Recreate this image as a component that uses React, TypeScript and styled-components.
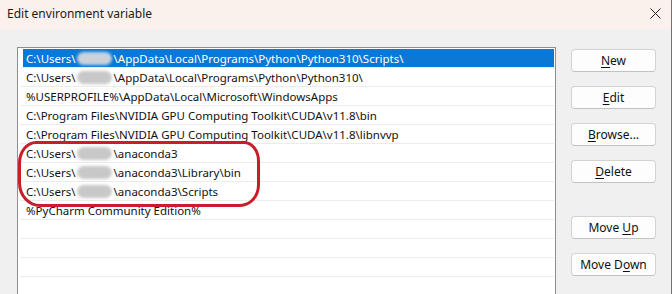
import React from "react";
import styled, { createGlobalStyle } from "styled-components";

const Global = createGlobalStyle`
  html, body { margin: 0; padding: 0; background: #f0f0f0; }
  body { font-family: "Noto Sans", "Open Sans", sans-serif; }
  #root { width: 672px; height: 294px; overflow: hidden; }
`;

const Window = styled.div`
  width: 672px;
  height: 294px;
  box-sizing: border-box;
  border-right: 1px solid #75706d;
  background: #f0f0f0;
  display: flex;
  flex-direction: column;
  overflow: hidden;
  font-size: 12px;
  color: #000;
`;

const TitleBar = styled.div`
  height: 29px;
  flex: none;
  background: #fbf1ec;
  display: flex;
  align-items: center;
  justify-content: space-between;
  padding: 0 10px 3px 7px;
  box-sizing: border-box;
`;

const Title = styled.span`
  font-size: 12px;
  color: #1a1a1a;
`;

const CloseIcon = styled.svg`
  width: 11px;
  height: 11px;
  display: block;
`;

const Body = styled.div`
  flex: 1;
  display: flex;
  align-items: flex-start;
  padding: 18px 15px 0 17px;
  gap: 15px;
  min-height: 0;
`;

const ListBox = styled.div`
  position: relative;
  width: 539px;
  height: 260px;
  box-sizing: border-box;
  background: #fff;
  border: 1px solid #8e8e8e;
  border-bottom: none;
  padding: 1px 1px 0 2px;
  flex: none;
`;

const Row = styled.div`
  height: 18px;
  border-bottom: 1px solid #ececec;
  display: flex;
  align-items: center;
`;

const RowInner = styled.div<{ $selected?: boolean }>`
  flex: 1;
  height: 18px;
  margin-left: 3px;
  padding-left: 3px;
  display: flex;
  align-items: center;
  white-space: pre;
  font-size: 11.5px;
  background: ${(p) => (p.$selected ? "#0a78d4" : "transparent")};
  color: ${(p) => (p.$selected ? "#fff" : "#111")};
`;

const Blur = styled.span<{ $selected?: boolean }>`
  display: inline-block;
  width: 38px;
  height: 14px;
  position: relative;
  vertical-align: middle;
  &::after {
    content: "";
    position: absolute;
    left: 1px;
    right: 2px;
    top: 1px;
    bottom: 0px;
    border-radius: 7px;
    background: ${(p) => (p.$selected ? "#ccd2da" : "#c8c8c8")};
    filter: blur(1.4px);
  }
`;

const Highlight = styled.div`
  position: absolute;
  left: 0px;
  top: 93px;
  width: 236px;
  height: 60px;
  border: 3px solid #c81e2b;
  border-radius: 18px 16px 20px 22px / 22px 20px 22px 24px;
  pointer-events: none;
`;

const Buttons = styled.div`
  width: 85px;
  flex: none;
  display: flex;
  flex-direction: column;
  gap: 14px;
  padding-top: 2px;
`;

const Button = styled.button<{ $spaced?: boolean }>`
  height: 23px;
  box-sizing: border-box;
  width: 85px;
  border: 1px solid #d3d3d3;
  border-bottom-color: #c2c2c2;
  border-radius: 4px;
  background: #fdfdfd;
  font-family: "Noto Sans", "Open Sans", sans-serif;
  font-size: 12px;
  color: #111;
  padding: 0;
  margin-top: ${(p) => (p.$spaced ? "19px" : "0")};
  u { text-decoration-thickness: 1px; text-underline-offset: 2px; }
`;

type Item = { pre: string; user?: boolean; post?: string };

const items: Item[] = [
  { pre: "C:\\Users\\", user: true, post: "\\AppData\\Local\\Programs\\Python\\Python310\\Scripts\\" },
  { pre: "C:\\Users\\", user: true, post: "\\AppData\\Local\\Programs\\Python\\Python310\\" },
  { pre: "%USERPROFILE%\\AppData\\Local\\Microsoft\\WindowsApps" },
  { pre: "C:\\Program Files\\NVIDIA GPU Computing Toolkit\\CUDA\\v11.8\\bin" },
  { pre: "C:\\Program Files\\NVIDIA GPU Computing Toolkit\\CUDA\\v11.8\\libnvvp" },
  { pre: "C:\\Users\\", user: true, post: "\\anaconda3" },
  { pre: "C:\\Users\\", user: true, post: "\\anaconda3\\Library\\bin" },
  { pre: "C:\\Users\\", user: true, post: "\\anaconda3\\Scripts" },
  { pre: "%PyCharm Community Edition%" },
  { pre: "" },
  { pre: "" },
  { pre: "" },
  { pre: "" },
];

export default function App() {
  return (
    <>
      <Global />
      <Window>
        <TitleBar>
          <Title>Edit environment variable</Title>
          <CloseIcon viewBox="0 0 11 11">
            <path d="M0.5 0.5 L10.5 10.5 M10.5 0.5 L0.5 10.5" stroke="#222" strokeWidth="1" fill="none" />
          </CloseIcon>
        </TitleBar>
        <Body>
          <ListBox>
            {items.map((it, i) => (
              <Row key={i}>
                <RowInner $selected={i === 0}>
                  {it.pre}
                  {it.user && <Blur $selected={i === 0} />}
                  {it.post}
                </RowInner>
              </Row>
            ))}
            <Highlight />
          </ListBox>
          <Buttons>
            <Button><u>N</u>ew</Button>
            <Button><u>E</u>dit</Button>
            <Button><u>B</u>rowse...</Button>
            <Button><u>D</u>elete</Button>
            <Button $spaced>Move <u>U</u>p</Button>
            <Button>Move D<u>o</u>wn</Button>
          </Buttons>
        </Body>
      </Window>
    </>
  );
}
